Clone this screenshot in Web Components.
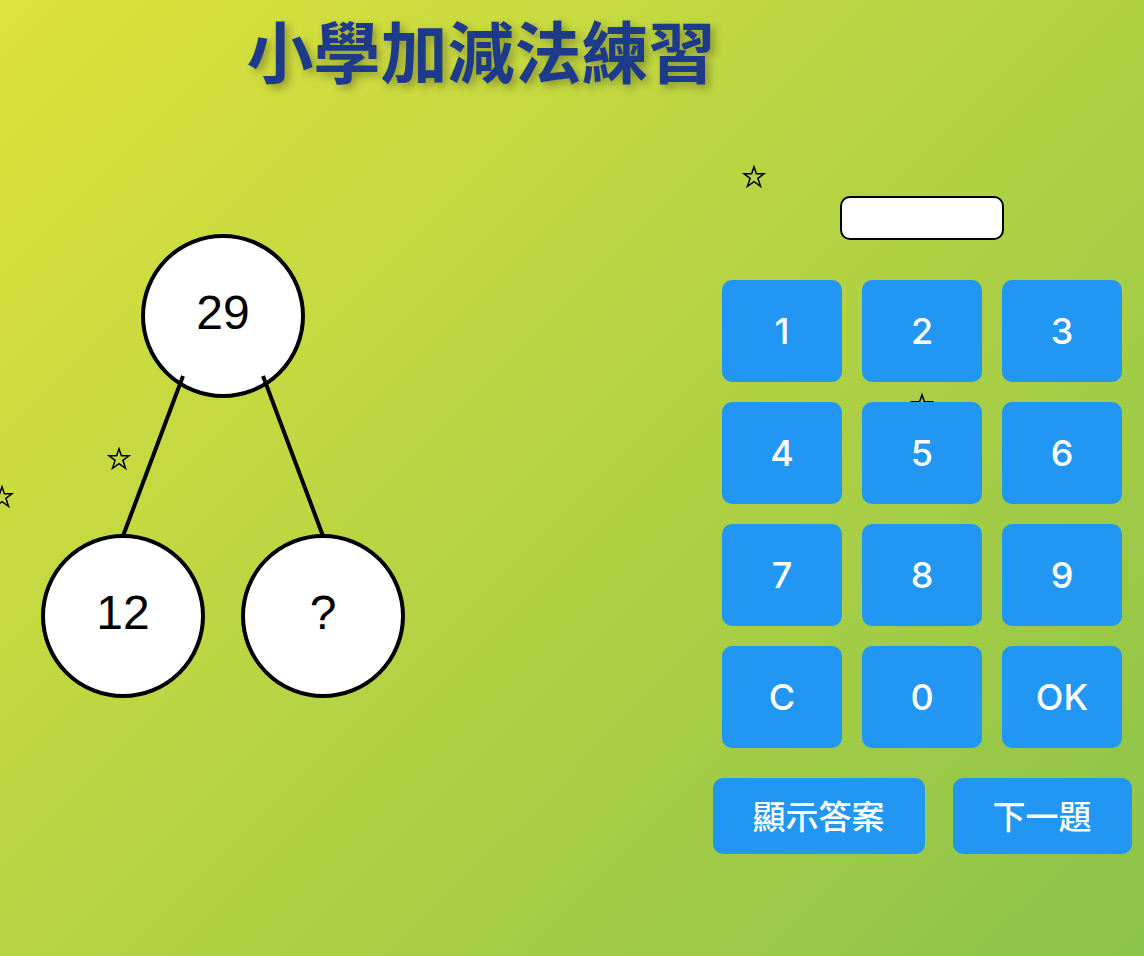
<!DOCTYPE html>
<html lang="zh-Hant">
<head>
<meta charset="utf-8">
<meta name="viewport" content="width=device-width, initial-scale=1">
<title>小學加減法練習</title>
<style>
body { margin: 0; font-family: Inter, "Noto Sans CJK TC", sans-serif; }
</style>
</head>
<body>
<practice-page>
  <page-title slot="title">小學加減法練習</page-title>
  <star-field slot="stars"></star-field>
  <number-bond slot="problem" whole="29" left="12" right="?"></number-bond>
  <answer-panel slot="panel"></answer-panel>
</practice-page>
<script>
class ShadowElement extends HTMLElement {
  constructor() {
    super();
    this.attachShadow({ mode: "open" }).innerHTML = this.render();
  }
  render() { return ""; }
}

customElements.define("practice-page", class extends ShadowElement {
  render() {
    return `<style>
      :host { display: flex; flex-direction: column; box-sizing: border-box; min-height: 100vh; position: relative; overflow: hidden;
        background: linear-gradient(135deg, #dee23c, #8bc34a); }
      header { max-width: 962px; }
      main { display: flex; align-items: flex-start; justify-content: space-between; padding-top: 98px; position: relative; z-index: 1; }
    </style>
    <slot name="stars"></slot>
    <header><slot name="title"></slot></header>
    <main><slot name="problem"></slot><slot name="panel"></slot></main>`;
  }
});

customElements.define("page-title", class extends ShadowElement {
  render() {
    return `<style>
      :host { display: block; }
      h1 { margin: 0; font: 700 67px/98px "Noto Sans CJK TC", sans-serif; text-align: center; color: #1e3a8a;
        text-shadow: 4px 4px 8px rgba(0, 0, 0, 0.3); }
    </style><h1><slot></slot></h1>`;
  }
});

customElements.define("star-field", class extends ShadowElement {
  render() {
    const stars = [[754, 177], [119, 459], [2, 497], [922, 405]];
    return `<style>
      :host { position: absolute; inset: 0; pointer-events: none; }
      svg { position: absolute; width: 26px; height: 26px; margin: -13px 0 0 -13px; fill: none; stroke: #000; stroke-width: 1.4; }
    </style>` + stars.map(([x, y]) => `<svg viewBox="0 0 24 24" aria-hidden="true" style="left:${x}px;top:${y}px">
      <path d="M12 2.6 L14.2 9.1 H21.1 L15.6 13.2 L18 20.6 L12 16.3 L6 20.6 L8.4 13.2 L2.9 9.1 H9.8 Z"/></svg>`).join("");
  }
});

customElements.define("number-bond", class extends ShadowElement {
  render() {
    const node = (x, y, text) =>
      `<circle cx="${x}" cy="${y}" r="80"/><text x="${x}" y="${y + 13}">${text}</text>`;
    return `<style>
      :host { display: block; padding: 38px 0 0 41px; }
      svg { display: block; }
      circle { fill: #fff; stroke: #000; stroke-width: 4; }
      line { stroke: #000; stroke-width: 4; }
      text { font: 48px "Liberation Sans", Arial, sans-serif; text-anchor: middle; fill: #000; }
    </style>
    <svg width="364" height="464" viewBox="0 0 364 464" role="img">
      ${node(182, 82, this.getAttribute("whole"))}
      ${node(82, 382, this.getAttribute("left"))}
      ${node(282, 382, this.getAttribute("right"))}
      <line x1="142" y1="142" x2="82" y2="302"/>
      <line x1="222" y1="142" x2="282" y2="302"/>
    </svg>`;
  }
});

customElements.define("pad-button", class extends ShadowElement {
  render() {
    return `<style>
      :host { display: block; }
      button { display: block; width: 100%; border: 0; border-radius: 10px; background: #2196f3; color: #fff; cursor: pointer;
        padding: 0; font: 500 36px/102px Inter, sans-serif; }
      :host([wide]) button { padding: 0 40px 2px; font: 500 33px/74px "Noto Sans CJK TC", sans-serif; }
    </style><button type="button"><slot></slot></button>`;
  }
});

customElements.define("answer-panel", class extends ShadowElement {
  render() {
    const keys = ["1", "2", "3", "4", "5", "6", "7", "8", "9", "C", "0", "OK"];
    return `<style>
      :host { display: flex; flex-direction: column; align-items: center; width: 444px; }
      input { box-sizing: border-box; width: 164px; height: 44px; margin: 0 0 40px; border: 2px solid #000; border-radius: 10px;
        background: #fff; font: 24px Inter, sans-serif; text-align: center; }
      .keys { display: grid; grid-template-columns: repeat(3, 120px); gap: 20px; }
      .actions { display: flex; gap: 28px; margin-top: 30px; }
    </style>
    <input type="text" aria-label="答案" readonly>
    <div class="keys">${keys.map(k => `<pad-button>${k}</pad-button>`).join("")}</div>
    <div class="actions"><pad-button wide>顯示答案</pad-button><pad-button wide>下一題</pad-button></div>`;
  }
  connectedCallback() {
    const input = this.shadowRoot.querySelector("input");
    this.shadowRoot.querySelector(".keys").addEventListener("click", event => {
      const key = event.target.closest("pad-button");
      if (!key || key.textContent === "OK") return;
      input.value = key.textContent === "C" ? "" : input.value + key.textContent;
    });
  }
});
</script>
</body>
</html>
